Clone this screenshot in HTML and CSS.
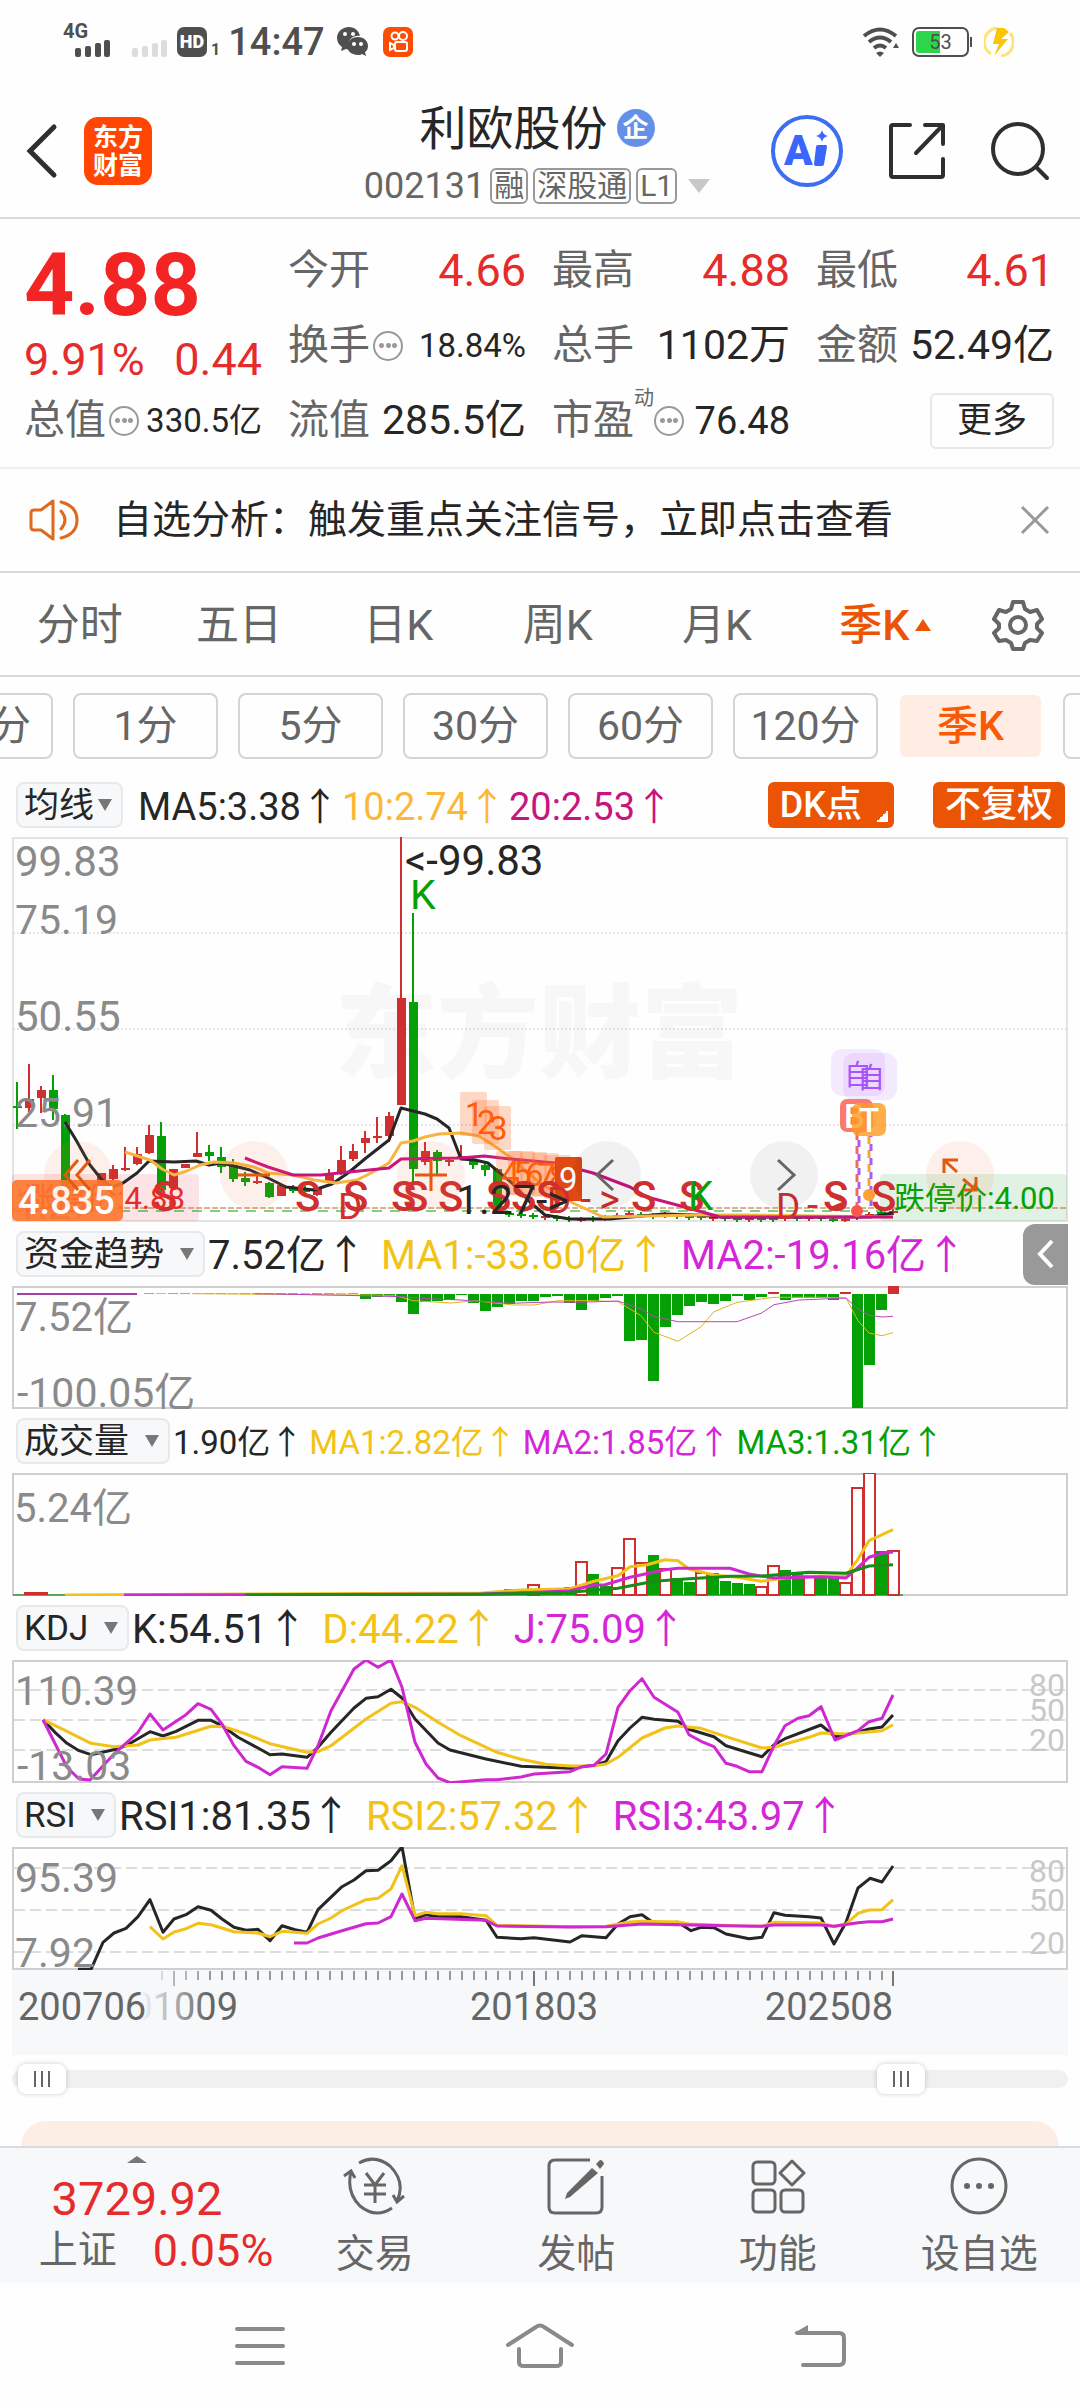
FILE: index.html
```
<!DOCTYPE html>
<html lang="zh-CN">
<head>
    <meta charset="UTF-8">
    <meta name="viewport" content="width=device-width, initial-scale=1.0">
    <title>利欧股份 002131</title>
    <link rel="stylesheet" href="styles.css">
</head>
<body>
    <div class="status">
        <svg class="signal" width="52" height="36" viewBox="-1 -2 52 36">
            <text x="0" y="15" class="net">4G</text>
            <g fill="#4f4f4f">
                <rect x="12" y="25" width="6" height="9" rx="2"/>
                <rect x="22" y="23" width="6" height="11" rx="2"/>
                <rect x="32" y="20" width="6" height="14" rx="2"/>
                <rect x="41" y="17" width="6" height="17" rx="2"/>
            </g>
        </svg>
        <svg class="signal-off" width="36" height="34" viewBox="0 0 36 34" fill="#dcdcdc">
            <rect x="0" y="25" width="6" height="9" rx="2"/>
            <rect x="10" y="23" width="6" height="11" rx="2"/>
            <rect x="20" y="20" width="6" height="14" rx="2"/>
            <rect x="29" y="17" width="6" height="17" rx="2"/>
        </svg>
        <span class="hd">HD</span>
        <span class="sim">1</span>
        <span class="clock">14:47</span>
        <svg class="wechat" width="32" height="30" viewBox="0 0 32 30" fill="#4f4f4f">
            <path d="M12 0C5 0 0 5 0 11c0 4 2 7 5 9l-1 4 5-2c1 0 2 .5 3 .4C9 13 16 8 23 9 22 4 18 0 12 0z"/>
            <path d="M21 10c-6 0-11 4-11 9s5 9 11 9c1 0 3 0 4-1l4 2-1-4c2-1 3-4 3-6 0-5-4-9-10-9z"/>
            <g fill="#fff"><circle cx="8" cy="7" r="2"/><circle cx="16" cy="7" r="2"/><circle cx="17" cy="17" r="2"/><circle cx="24" cy="17" r="2"/></g>
        </svg>
        <svg class="video" width="30" height="30" viewBox="0 0 30 30">
            <rect width="30" height="30" rx="7" fill="#fb4d04"/>
            <g fill="none" stroke="#fff" stroke-width="2">
                <circle cx="12" cy="9" r="3.5"/><circle cx="20" cy="9" r="4"/>
                <rect x="12" y="15" width="12" height="9" rx="2"/>
                <path d="M11 18l-4-2v7l4-2z"/>
            </g>
        </svg>
        <svg class="wifi" width="38" height="30" viewBox="0 0 38 30">
            <g fill="none" stroke="#4f4f4f" stroke-width="4">
                <path d="M2 9Q18-4 34 9"/><path d="M7 15Q18 6 29 15"/><path d="M12 21Q18 16 24 21"/>
            </g>
            <path d="M14 26q4-3 8 0l-4 4zM31 21l3-5 3 5z" fill="#4f4f4f"/>
        </svg>
        <span class="battery">53</span>
        <svg width="30" height="30" viewBox="0 0 30 30">
            <path d="M14 1A14 14 0 0 0 7 27" fill="none" stroke="#ffe27a" stroke-width="3"/>
            <path d="M17 29A14 14 0 0 0 26 6" fill="none" stroke="#ffe27a" stroke-width="3"/>
            <path d="M13 1L9 17h6L10 29 24 12h-7L25 5 20 1z" fill="#fdc500"/>
        </svg>
    </div>

    <header class="header">
        <div class="side">
            <a href="#" class="icon" aria-label="返回">
                <svg width="34" height="56" viewBox="0 0 34 56" fill="none" stroke="#2f2f2f" stroke-width="5" stroke-linecap="round"><path d="M30 4L6 28l24 24"/></svg>
            </a>
            <a href="#" class="logo"><span>东方</span><span>财富</span></a>
        </div>
        <div class="title">
            <h1>利欧股份<span class="corp">企</span></h1>
            <button class="code">002131<span>融</span><span>深股通</span><span>L1</span><i class="caret"></i></button>
        </div>
        <div class="side right">
            <button class="icon" aria-label="Ai">
                <svg width="74" height="74" viewBox="0 0 74 74">
                    <circle cx="37" cy="37" r="34" fill="none" stroke="#3d6df0" stroke-width="4"/>
                    <g fill="#3a66ff">
                        <text x="14" y="51" class="ai">A</text>
                        <path d="M48 31h8q1 0 1 2l-3 17q0 2-2 2h-6q-2 0-2-2l2-17q0-2 2-2zM52 16q1 5 6 6-5 1-6 6-1-5-6-6 5-1 6-6z"/>
                    </g>
                </svg>
            </button>
            <button class="icon" aria-label="分享">
                <svg width="58" height="58" viewBox="0 0 58 58" fill="none" stroke="#2f2f2f" stroke-width="4" stroke-linecap="round" stroke-linejoin="round">
                    <path d="M22 3H5q-2 0-2 2v48q0 2 2 2h48q2 0 2-2V37M37 3h18v19M55 3L28 31"/>
                </svg>
            </button>
            <button class="icon" aria-label="搜索">
                <svg width="60" height="60" viewBox="0 0 60 60" fill="none" stroke="#2f2f2f" stroke-width="4" stroke-linecap="round">
                    <circle cx="28" cy="28" r="25"/><path d="M47 47l10 10"/>
                </svg>
            </button>
        </div>
    </header>

    <section class="quote">
        <div class="price">
            <strong>4.88</strong>
            <p><span>9.91%</span><span>0.44</span></p>
        </div>
        <div class="stat"><span>今开</span><b class="up">4.66</b></div>
        <div class="stat"><span>最高</span><b class="up">4.88</b></div>
        <div class="stat"><span>最低</span><b class="up">4.61</b></div>
        <div class="stat"><span>换手<i class="info"></i></span><b class="small">18.84%</b></div>
        <div class="stat"><span>总手</span><b>1102万</b></div>
        <div class="stat"><span>金额</span><b>52.49亿</b></div>
        <div class="stat"><span>总值<i class="info"></i></span><b class="small">330.5亿</b></div>
        <div class="stat"><span>流值</span><b>285.5亿</b></div>
        <div class="stat"><span>市盈<sup>动</sup><i class="info"></i></span><b class="mid">76.48</b></div>
        <button class="more">更多</button>
    </section>

    <section class="notice">
        <svg width="52" height="44" viewBox="0 0 52 44" fill="none" stroke="#e06a1c" stroke-width="3" stroke-linejoin="round" stroke-linecap="round">
            <path d="M24 3v38L12 32H5q-3 0-3-3V15q0-3 3-3h7z"/><path d="M32 13q8 9 0 18M32 4q16 4 16 18T32 40"/>
        </svg>
        <a href="#">自选分析：触发重点关注信号，立即点击查看</a>
        <button class="icon" aria-label="关闭">
            <svg width="30" height="30" viewBox="0 0 30 30" stroke="#999" stroke-width="3"><path d="M2 2l26 26M28 2L2 28"/></svg>
        </button>
    </section>

    <nav class="tabs">
        <a href="#">分时</a>
        <a href="#">五日</a>
        <a href="#">日K</a>
        <a href="#">周K</a>
        <a href="#">月K</a>
        <a href="#" class="active">季K<i class="caret-up"></i></a>
        <button class="icon" aria-label="设置">
            <svg width="52" height="52" viewBox="0 0 52 52" fill="none" stroke="#666" stroke-width="4" stroke-linejoin="round">
                <path d="M21 3h10l2 7 5 3 7-2 5 9-5 5v4l5 5-5 8-7-1-5 3-2 6H21l-2-6-5-3-7 1-5-8 5-5v-4l-5-5 5-9 7 2 5-3z"/>
                <circle cx="26" cy="26" r="8"/>
            </svg>
        </button>
    </nav>

    <div class="periods">
        <button>分</button>
        <button>1分</button>
        <button>5分</button>
        <button>30分</button>
        <button>60分</button>
        <button>120分</button>
        <button class="active">季K</button>
        <button aria-label="更多周期"></button>
    </div>

    <main>
        <div class="legend legend-ma">
            <span class="pick tight"><select aria-label="主图指标"><option>均线</option></select></span>
            <span>MA5:3.38<i>↑</i></span>
            <span class="amber">10:2.74<i>↑</i></span>
            <span class="rose">20:2.53<i>↑</i></span>
            <button class="tag corner">DK点</button>
            <button class="tag">不复权</button>
        </div>
        <div class="chart">
            <svg id="price" viewBox="12 837 1056 385"></svg>
            <div class="tools">
                <button aria-label="最早"><svg viewBox="0 0 68 68"><path d="M34 19L21 34l13 15M46 19L33 34l13 15"/></svg></button>
                <button aria-label="缩小"><svg viewBox="0 0 68 68"><path d="M18 34h32"/></svg></button>
                <button aria-label="放大"><svg viewBox="0 0 68 68"><path d="M18 34h32M34 18v32"/></svg></button>
                <button class="gray" aria-label="左移"><svg viewBox="0 0 68 68"><path d="M40 19L24 34l16 15"/></svg></button>
                <button class="gray" aria-label="右移"><svg viewBox="0 0 68 68"><path d="M28 19l16 15-16 15"/></svg></button>
                <button aria-label="全屏"><svg viewBox="0 0 68 68"><path d="M18 32V19h14M18 19l13 12M50 36v13H37M50 49L37 38"/></svg></button>
            </div>
        </div>

        <div class="legend">
            <span class="pick"><select aria-label="指标一"><option>资金趋势</option></select></span>
            <span>7.52亿<i>↑</i></span>
            <span class="yellow">MA1:-33.60亿<i>↑</i></span>
            <span class="purple">MA2:-19.16亿<i>↑</i></span>
            <button class="fold" aria-label="收起">
                <svg width="20" height="32" viewBox="0 0 20 32" fill="none" stroke="#fff" stroke-width="4"><path d="M16 3L4 16l12 13"/></svg>
            </button>
        </div>
        <svg class="panel" id="fund" viewBox="0 0 1056 123"></svg>

        <div class="legend dense">
            <span class="pick"><select aria-label="指标二"><option>成交量</option></select></span>
            <span>1.90亿<i>↑</i></span>
            <span class="yellow">MA1:2.82亿<i>↑</i></span>
            <span class="purple">MA2:1.85亿<i>↑</i></span>
            <span class="green">MA3:1.31亿<i>↑</i></span>
        </div>
        <svg class="panel" id="volume" viewBox="0 0 1056 123"></svg>

        <div class="legend">
            <span class="pick"><select aria-label="指标三"><option>KDJ</option></select></span>
            <span>K:54.51<i>↑</i></span>
            <span class="yellow">D:44.22<i>↑</i></span>
            <span class="purple">J:75.09<i>↑</i></span>
        </div>
        <svg class="panel" id="kdj" viewBox="0 0 1056 123"></svg>

        <div class="legend">
            <span class="pick"><select aria-label="指标四"><option>RSI</option></select></span>
            <span>RSI1:81.35<i>↑</i></span>
            <span class="yellow">RSI2:57.32<i>↑</i></span>
            <span class="purple">RSI3:43.97<i>↑</i></span>
        </div>
        <svg class="panel" id="rsi" viewBox="0 0 1056 123"></svg>
        <svg class="axis" id="axis" viewBox="0 0 1056 85"></svg>

        <div class="range">
            <input type="range" min="0" max="1000" value="6" aria-label="开始">
            <input type="range" min="0" max="1000" value="858" aria-label="结束">
        </div>
        <div class="card"></div>
    </main>

    <footer class="bar">
        <a href="#" class="index">
            <i class="caret-up"></i>
            <strong>3729.92</strong>
            <span><em>上证</em>0.05%</span>
        </a>
        <a href="#">
            <svg width="66" height="60" viewBox="0 0 66 60" fill="none" stroke="#666" stroke-width="3">
                <path d="M17 7Q33-2 48 10 64 26 55 45M50 52Q34 63 18 50 4 36 9 16M2 20l7-5 4 7M62 40l-7 6-4-7"/>
                <path d="M24 17l9 12 9-12M22 29h22M22 38h22M33 29v18"/>
            </svg>
            交易
        </a>
        <a href="#">
            <svg width="60" height="60" viewBox="0 0 60 60" fill="none" stroke="#666" stroke-width="3">
                <path d="M44 4H9q-6 0-6 6v41q0 6 6 6h41q6 0 6-6V20"/>
                <path d="M46 12l6 5-28 24-5 2 2-6zM50 8l4-4q3 0 4 4l-4 5z" fill="#666" stroke="none"/>
            </svg>
            发帖
        </a>
        <a href="#">
            <svg width="60" height="60" viewBox="0 0 60 60" fill="none" stroke="#666" stroke-width="3">
                <rect x="5" y="6" width="22" height="22" rx="4"/>
                <rect x="5" y="34" width="22" height="22" rx="4"/>
                <rect x="33" y="34" width="22" height="22" rx="4"/>
                <path d="M44 5l12 12-12 12-12-12z" stroke-linejoin="round"/>
            </svg>
            功能
        </a>
        <a href="#">
            <svg width="60" height="60" viewBox="0 0 60 60">
                <circle cx="30" cy="30" r="27" fill="none" stroke="#666" stroke-width="3"/>
                <g fill="#666"><circle cx="18" cy="30" r="3"/><circle cx="30" cy="30" r="3"/><circle cx="42" cy="30" r="3"/></g>
            </svg>
            设自选
        </a>
    </footer>

    <nav class="system">
        <button class="icon" aria-label="菜单">
            <svg width="52" height="44" viewBox="0 0 52 44" stroke="#8a8a8a" stroke-width="4" stroke-linecap="round"><path d="M3 5h46M3 22h46M3 39h46"/></svg>
        </button>
        <button class="icon" aria-label="主页">
            <svg width="70" height="46" viewBox="0 0 70 46" fill="none" stroke="#8a8a8a" stroke-width="4" stroke-linecap="round" stroke-linejoin="round"><path d="M3 22L31 4q4-3 8 0l28 18M14 26v13q0 4 5 4h32q5 0 5-4V26"/></svg>
        </button>
        <button class="icon" aria-label="后退">
            <svg width="54" height="46" viewBox="0 0 54 46" fill="none" stroke="#8a8a8a" stroke-width="4" stroke-linecap="round"><path d="M4 10h42q5 0 5 5v22q0 5-5 5H10"/><path d="M1 10L15 2v9z" fill="#8a8a8a" stroke="none"/></svg>
        </button>
    </nav>
    <script src="script.js"></script>
</body>
</html>
```
FILE: styles.css
```
* {
    box-sizing: border-box;
}

:root {
    --text: #262626;
    --gray: #666;
    --line: #d9d9d9;
    --red: #e52b2b;
    --orange: #ea5404;
    --yellow: #f2c218;
    --purple: #d426d8;
    --green: #05a005;
}

body {
    margin: 0;
    background: #fefefe;
    color: var(--text);
    font-family: Roboto, "Noto Sans CJK SC", sans-serif;
    font-size: 40px;
    line-height: 1;
}

a {
    color: inherit;
    text-decoration: none;
}

button,
select {
    font: inherit;
    color: inherit;
    background: none;
    border: 0;
    padding: 0;
    margin: 0;
}

i,
em {
    font-style: normal;
}

svg {
    display: block;
}

.icon {
    display: grid;
    place-items: center;
}

/* status bar */
.status {
    display: flex;
    align-items: center;
    height: 80px;
    padding: 4px 66px 0 62px;
    color: #4f4f4f;
}

.signal {
    margin-top: -6px;
}

.net {
    font-size: 20px;
    font-weight: 700;
    fill: #4f4f4f;
}

.signal-off {
    margin: -4px 9px 0 18px;
}

.hd {
    display: grid;
    place-items: center;
    width: 30px;
    height: 30px;
    border-radius: 7px;
    background: #4f4f4f;
    color: #fff;
    font-size: 18px;
    font-weight: 900;
}

.sim {
    margin: 16px 8px 0 4px;
    font-size: 16px;
    font-weight: 700;
}

.clock {
    font-size: 38px;
    font-weight: 500;
}

.wechat {
    margin-left: 12px;
}

.video {
    margin-left: 14px;
}

.wifi {
    margin-left: auto;
}

.battery {
    position: relative;
    display: grid;
    place-items: center;
    width: 57px;
    height: 30px;
    margin: 0 15px 0 12px;
    border: 2px solid #4f4f4f;
    border-radius: 7px;
    background: linear-gradient(90deg, #2cd549 50%, transparent 50%) content-box;
    padding: 2px;
    font-size: 20px;
}

.battery::after {
    content: "";
    position: absolute;
    right: -5px;
    width: 2px;
    height: 10px;
    background: #4f4f4f;
}

/* header */
.header {
    display: grid;
    grid-template-columns: 1fr auto 1fr;
    align-items: center;
    height: 139px;
    padding: 5px 30px 0 24px;
    border-bottom: 2px solid var(--line);
}

.side {
    display: flex;
    align-items: center;
    gap: 26px;
}

.right {
    justify-content: flex-end;
    gap: 44px;
}

.logo {
    display: grid;
    place-content: center;
    gap: 3px;
    width: 68px;
    height: 68px;
    border-radius: 14px;
    background: #ff4602;
    color: #fff;
    font-size: 25px;
    font-weight: 700;
}

.title {
    display: grid;
    justify-items: center;
    gap: 16px;
    padding-top: 6px;
}

h1 {
    display: flex;
    align-items: center;
    gap: 9px;
    margin: 0;
    font-size: 47px;
    font-weight: 400;
}

.corp {
    display: grid;
    place-items: center;
    width: 38px;
    height: 38px;
    border-radius: 50%;
    background: #6590e8;
    color: #fff;
    font-size: 26px;
    font-weight: 700;
}

.code {
    display: flex;
    align-items: center;
    gap: 5px;
    color: var(--gray);
    font-size: 36px;
}

.code span {
    height: 36px;
    padding: 0 2px;
    border: 2px solid #999;
    border-radius: 6px;
    font-size: 30px;
    line-height: 32px;
}

.caret {
    margin-left: 6px;
    border: 11px solid transparent;
    border-top: 14px solid #c8c8c8;
    border-bottom: 0;
}

.ai {
    font-size: 42px;
    font-weight: 900;
}

/* quote */
.quote {
    display: grid;
    grid-template-columns: repeat(4, 1fr);
    grid-auto-rows: 75px;
    column-gap: 26px;
    padding: 14px 26px 9px 24px;
    border-bottom: 2px solid #eee;
}

.price {
    grid-row: span 2;
    color: var(--red);
}

.price strong {
    display: block;
    color: #f32424;
    font-size: 88px;
    font-weight: 700;
    line-height: 104px;
}

.price p {
    display: flex;
    justify-content: space-between;
    margin: 0;
    font-size: 45px;
}

.stat {
    display: flex;
    align-items: center;
    justify-content: space-between;
    white-space: nowrap;
}

.stat span {
    display: flex;
    align-items: center;
    gap: 3px;
    color: var(--gray);
    font-size: 41px;
}

.stat sup {
    align-self: flex-start;
    margin: -12px -3px 0;
    font-size: 20px;
}

.stat b {
    font-size: 41px;
    font-weight: 400;
}

.stat .up {
    color: var(--red);
    font-size: 45px;
}

.stat .small {
    font-size: 33px;
}

.stat .mid {
    font-size: 38px;
}

.info {
    width: 30px;
    height: 30px;
    border: 2px solid #999;
    border-radius: 50%;
    background: radial-gradient(circle, #999 2px, transparent 3px) center / 7px 7px no-repeat,
        radial-gradient(circle, #999 2px, transparent 3px) 3px center / 7px 7px no-repeat,
        radial-gradient(circle, #999 2px, transparent 3px) 16px center / 7px 7px no-repeat;
}

.more {
    place-self: center end;
    width: 124px;
    height: 56px;
    border: 2px solid #e8e8e8;
    border-radius: 6px;
    font-size: 35px;
}

/* notice */
.notice {
    display: flex;
    align-items: center;
    gap: 32px;
    height: 104px;
    padding: 0 30px 0 29px;
    border-bottom: 2px solid var(--line);
    font-size: 39px;
}

.notice .icon {
    margin-left: auto;
}

/* tabs */
.tabs {
    display: grid;
    grid-template-columns: repeat(6, 1fr) 124px;
    align-items: center;
    height: 104px;
    padding-top: 2px;
    border-bottom: 2px solid var(--line);
    color: var(--gray);
    font-size: 43px;
    text-align: center;
}

.tabs .active {
    display: flex;
    align-items: center;
    justify-content: center;
    gap: 6px;
    padding-left: 18px;
    color: var(--orange);
    font-weight: 500;
}

.caret-up {
    border: 8px solid transparent;
    border-bottom: 12px solid currentColor;
    border-top: 0;
}

.periods {
    display: flex;
    gap: 20px;
    margin: 16px 0 0 -92px;
    overflow: hidden;
}

.periods button {
    flex: 0 0 145px;
    height: 66px;
    border: 2px solid #d4d4d4;
    border-radius: 8px;
    color: var(--gray);
    font-size: 41px;
}

.periods button:first-child {
    padding-left: 60px;
}

.periods .active {
    border-color: #fefefe;
    background: #ffede4;
    color: #fa5a05;
    font-weight: 500;
}

/* charts */
main {
    padding: 0 12px;
}

.legend {
    display: flex;
    align-items: center;
    gap: 15px;
    height: 64px;
    padding-left: 4px;
    font-size: 40px;
    white-space: nowrap;
}

.legend i {
    font-family: "Noto Sans CJK SC", sans-serif;
}

.legend-ma {
    gap: 3px;
    height: 78px;
    padding: 14px 3px 0 4px;
    font-size: 38px;
}

.dense {
    gap: 6px;
    font-size: 33px;
}

.pick {
    position: relative;
    margin-right: -12px;
}

.dense .pick {
    margin-right: -3px;
}

.tight {
    margin-right: 12px;
}

.pick::after {
    content: "";
    position: absolute;
    right: 11px;
    top: 17px;
    border: 7px solid transparent;
    border-top: 12px solid #777;
    border-bottom: 0;
    pointer-events: none;
}

.pick select {
    appearance: none;
    height: 46px;
    padding: 0 38px 0 6px;
    border: 2px solid #e8e9eb;
    border-radius: 8px;
    background: #f7f8fa;
    font-size: 35px;
}

.tight select {
    padding-right: 26px;
}

.amber {
    color: #fbb836;
}

.rose {
    color: #c8147e;
}

.yellow {
    color: var(--yellow);
}

.purple {
    color: var(--purple);
}

.green {
    color: var(--green);
}

.tag {
    height: 46px;
    margin-left: 36px;
    padding: 0 12px;
    border-radius: 6px;
    background: var(--orange);
    color: #fff;
    font-size: 36px;
    font-weight: 500;
}

.corner {
    margin-left: auto;
    padding-right: 32px;
    background: linear-gradient(135deg, transparent 50%, #fff 50%) right 6px bottom 6px / 12px 12px no-repeat, var(--orange);
}

.fold {
    display: grid;
    place-items: center;
    width: 45px;
    height: 61px;
    margin-left: auto;
    border-radius: 12px 0 0 12px;
    background: #999;
}

.chart {
    position: relative;
}

.chart svg,
.panel,
.axis {
    width: 100%;
}

.tools {
    position: absolute;
    left: 3%;
    right: 7%;
    bottom: 13px;
    display: flex;
    justify-content: space-between;
}

.tools button {
    width: 68px;
    height: 68px;
    border-radius: 50%;
    background: rgba(250, 110, 50, .1);
}

.tools path {
    fill: none;
    stroke: #e05a10;
    stroke-width: 3;
}

.tools .gray {
    background: rgba(0, 0, 0, .05);
}

.tools .gray path {
    stroke: var(--gray);
}

.range {
    position: relative;
    height: 18px;
    margin-top: 15px;
    border-radius: 9px;
    background: #f0f0f2;
}

.range input {
    position: absolute;
    inset: -6px 0;
    width: 100%;
    height: 30px;
    margin: 0;
    appearance: none;
    background: none;
    pointer-events: none;
}

.range input::-webkit-slider-thumb {
    appearance: none;
    width: 48px;
    height: 30px;
    border-radius: 8px;
    box-shadow: 0 0 5px rgba(0, 0, 0, .2);
    background: repeating-linear-gradient(90deg, #666 0 2px, transparent 2px 7px) center / 16px 16px no-repeat, #fff;
    pointer-events: auto;
}

.card {
    height: 25px;
    margin: 33px 9px 0;
    border-radius: 40px 40px 0 0;
    background: #fdeee5;
}

/* bottom bar */
.bar {
    display: grid;
    grid-template-columns: 274px repeat(4, 1fr);
    height: 137px;
    border-top: 2px solid #d8dbe0;
    background: #f7f8fa;
    color: var(--gray);
    font-size: 39px;
}

.bar a {
    display: grid;
    justify-items: center;
    align-content: start;
    gap: 19px;
    padding-top: 8px;
}

.bar .index {
    gap: 6px;
    color: var(--red);
    font-size: 45px;
}

.index .caret-up {
    border-width: 0 10px 7px;
    border-bottom-color: #777;
}

.index strong {
    margin-top: 6px;
    font-weight: 400;
    font-size: 47px;
}

.index span {
    display: flex;
    align-items: center;
    gap: 36px;
    padding-left: 38px;
}

.index em {
    color: var(--gray);
    font-size: 39px;
}

.system {
    display: grid;
    grid-template-columns: repeat(3, 1fr);
    align-items: center;
    height: 125px;
    padding: 0 120px;
}
```
FILE: script.js
```
const RED = "#cf2f2f";
const GREEN = "#05a005";
const BLACK = "#262626";
const YELLOW = "#f2c218";
const PURPLE = "#cf28d0";
const STEP = 12;

// centre of the n-th candle, counted from the page's left edge
const barX = (i) => 17 + STEP * i;

const add = (id, html) => document.getElementById(id).insertAdjacentHTML("beforeend", html);

const rect = (x, y, w, h, fill, extra = "") =>
  `<rect x="${x}" y="${y}" width="${w}" height="${h}" fill="${fill}" ${extra}/>`;

const label = (x, y, text, fill, size = 40, extra = "") =>
  `<text x="${x}" y="${y}" fill="${fill}" font-size="${size}" ${extra}>${text}</text>`;

const dash = (x1, x2, y, color, pattern, width = 1) =>
  `<path d="M${x1} ${y}H${x2}" stroke="${color}" stroke-width="${width}" stroke-dasharray="${pattern}"/>`;

const line = (points, color, width = 3) =>
  `<polyline points="${points}" fill="none" stroke="${color}" stroke-width="${width}" stroke-linejoin="round"/>`;

/* ---------- price ---------- */
// index, up, high, low, body top, body bottom
const candles = [
  [0, 0, 1082, 1129, 1106, 1108], [1, 1, 1064, 1113, 1099, 1108], [2, 1, 1086, 1113, 1090, 1098],
  [3, 0, 1075, 1120, 1090, 1109], [4, 0, 1114, 1200, 1115, 1200], [7, 1, 1173, 1190, 1173, 1190],
  [8, 1, 1165, 1180, 1169, 1179], [9, 1, 1147, 1171, 1168, 1170], [10, 1, 1147, 1165, 1154, 1164],
  [11, 1, 1125, 1154, 1135, 1153], [12, 0, 1122, 1195, 1136, 1190], [13, 1, 1169, 1188, 1169, 1188],
  [14, 1, 1164, 1168, 1164, 1168], [15, 1, 1132, 1157, 1153, 1157], [16, 0, 1145, 1161, 1152, 1156],
  [17, 0, 1147, 1173, 1157, 1167], [18, 0, 1159, 1182, 1165, 1179], [19, 0, 1172, 1186, 1178, 1182],
  [20, 1, 1176, 1184, 1181, 1183], [21, 0, 1182, 1198, 1183, 1197], [22, 1, 1185, 1196, 1185, 1196],
  [23, 0, 1185, 1193, 1188, 1191], [24, 0, 1186, 1193, 1189, 1192], [25, 1, 1187, 1196, 1188, 1195],
  [26, 1, 1169, 1182, 1175, 1181], [27, 1, 1146, 1175, 1160, 1172], [28, 1, 1144, 1161, 1151, 1159],
  [29, 1, 1131, 1153, 1138, 1143], [30, 1, 1117, 1143, 1136, 1138], [31, 1, 1112, 1142, 1116, 1136],
  [32, 1, 837, 1105, 998, 1105], [33, 0, 913, 1185, 1002, 1169], [34, 1, 1142, 1165, 1151, 1162],
  [35, 0, 1150, 1176, 1152, 1161], [36, 1, 1157, 1166, 1160, 1162], [37, 1, 1145, 1158, 1156, 1158],
  [38, 0, 1156, 1169, 1161, 1165], [39, 0, 1162, 1176, 1165, 1170], [40, 0, 1168, 1212, 1169, 1212],
];
// the flat tail: body tops only, negative = down
const tail = [-1213, -1214, -1215, 1216, -1217, -1218, 1219, -1218, 1217, 1215, 1213, -1214, -1215, 1214,
  -1215, -1216, -1216, 1217, -1217, -1218, 1218, -1218, -1218, 1217, -1217, 1217, -1217, -1219, 1219, 1216, 1214, -1212, 1211];
tail.forEach((v, n) => {
  const y = Math.abs(v);
  candles.push([41 + n, v > 0 ? 1 : 0, y - 2, y + 4, y, y + 2]);
});

let price = rect(13, 838, 1054, 383, "none", 'stroke="#e3e3e3" stroke-width="2"');
price += label(335, 1070, "东方财富", "#f7f7f7", 102, 'font-weight="900"');
[933, 1029, 1125].forEach((y) => (price += dash(13, 1067, y, "#ccc", "2 2")));
price += rect(12, 1174, 187, 47, "rgba(240,50,70,.13)", 'rx="4"');
price += rect(880, 1174, 187, 47, "rgba(20,160,40,.12)", 'rx="4"');

candles.forEach(([i, up, high, low, top, bottom]) => {
  const c = up ? RED : GREEN;
  price += rect(barX(i) - 1, high, 2, low - high, c) + rect(barX(i) - 4, top, 9, bottom - top, c);
});

price += label(15, 876, "99.83", "#8a8a8a", 42);
price += label(15, 934, "75.19", "#8a8a8a", 41);
price += label(15, 1031, "50.55", "#8a8a8a", 42);
price += label(15, 1127, "25.91", "#8a8a8a", 41);
price += label(15, 1219, "1.27", "#8a8a8a");
price += dash(12, 1067, 1208, "#b9602f", "6 2", 1);
price += dash(12, 893, 1211, GREEN, "10 8", 1);

price += line("65,1122 76,1140 90,1165 102,1180 112,1187 123,1183 137,1173 149,1161 174,1162 196,1161 209,1165 221,1163 234,1166 250,1170 268,1178 286,1187 314,1190 332,1184 348,1173 366,1158 389,1140 401,1108 425,1114 437,1119 449,1128 461,1159 475,1160 488,1163 512,1183 530,1202 545,1215 570,1219 610,1219 663,1214 697,1215 723,1217 870,1217 893,1213", BLACK);
price += line("125,1152 150,1160 162,1169 174,1175 187,1171 200,1165 214,1162 234,1163 254,1167 268,1173 293,1175 314,1180 336,1183 357,1180 371,1173 389,1163 401,1143 413,1141 425,1137 439,1134 461,1133 479,1136 496,1147 510,1157 540,1183 573,1203 603,1217 697,1215 740,1215 893,1217", "#f6b440");
price += line("245,1158 268,1167 293,1175 321,1175 339,1173 389,1168 401,1159 461,1158 484,1156 511,1159 555,1163 593,1173 630,1187 647,1197 677,1205 720,1217 893,1217", "#c8147e");

// nine-turn counters
[[460, 1092], [472, 1100], [484, 1106], [496, 1151], [508, 1151], [520, 1152], [532, 1153], [544, 1155]].forEach(([x, y], n) => {
  price += rect(x, y, 27, 44, "rgba(255,110,40,.26)", 'rx="2"') + label(x + 5, y + 34, n + 1, "#ff5a05", 33);
});
price += rect(555, 1157, 27, 44, "#e04814", 'rx="2"') + label(559, 1191, 9, "#fff", 33);

[152, 295, 343, 391, 403, 438, 486, 511, 536, 631, 679, 823, 871].forEach((x) => {
  price += label(x, 1211, "S", RED, 42, 'font-weight="500"');
});
price += label(338, 1219, "D", RED, 37);
price += label(547, 1213, "D", RED, 37) + label(580, 1213, "-", RED) + label(599, 1213, "&gt;", RED);
price += label(776, 1219, "D", RED, 37) + label(807, 1219, "-", RED) + label(827, 1215, "&gt;", RED);
price += label(410, 909, "K", GREEN, 41) + label(688, 1210, "K", GREEN);
price += label(405, 875, "&lt;-99.83", BLACK, 42) + label(456, 1214, "1.27-&gt;", BLACK, 41);

price += `<g fill="none" stroke-width="3">
  <path d="M857 1132V1210" stroke="#ef6a62" stroke-dasharray="8 6"/>
  <path d="M859 1132V1210" stroke="#a95cf0" stroke-dasharray="7 7" stroke-dashoffset="6"/>
  <path d="M869 1136V1194" stroke="#f5a53c" stroke-dasharray="8 6"/>
  <path d="M871 1136V1206" stroke="#a95cf0" stroke-dasharray="7 7" stroke-dashoffset="6"/>
</g>
<circle cx="857" cy="1211" r="6" fill="#f8574a"/><circle cx="869" cy="1195" r="6" fill="#fda035"/>`;
price += rect(831, 1049, 54, 47, "rgba(170,90,245,.12)", 'rx="11"') + rect(843, 1053, 54, 47, "rgba(170,90,245,.12)", 'rx="11"');
price += label(844, 1085, "自", "#a855f7", 28) + label(857, 1088, "自", "#a855f7", 28);
price += rect(840, 1099, 33, 33, "#fa7a6c", 'rx="7"') + label(844, 1128, "B", "#fff", 33, 'font-weight="500"');
price += rect(852, 1103, 34, 33, "rgba(255,155,35,.82)", 'rx="7"') + label(859, 1132, "T", "#fff", 33, 'font-weight="500"');

price += label(24, 1209, "涨停价:4.88", "#e52b2b", 31) + label(894, 1209, "跌停价:4.00", GREEN, 31);
price += rect(12, 1180, 111, 41, "rgba(255,118,44,.9)", 'rx="5"') + label(18, 1214, "4.835", "#fff", 38, 'font-weight="500"');
add("price", price);

/* ---------- sub charts ---------- */
// plot units run 1568 wide and three to a pixel down from the panel's top
const sx = (x) => Math.round(x * 0.6888 - 12);
const plot = (data, top, color, width) =>
  line(data.split(" ").map((p) => {
    const [x, y] = p.split(",");
    return `${sx(x)},${((y - top) / 3).toFixed(1)}`;
  }).join(" "), color, width);
const frame = rect(1, 1, 1054, 121, "none", 'stroke="#cfcfcf" stroke-width="2"');

// fund flow, first bar is 29
const flow = [5, 3, 2, 8, 20, 8, 7, 6, 1, 9, 17, 13, 10, 7, 7, 3, 2, 9, 16, 7, 4, 2, 47, 46, 87, 33, 21, 12, 8, 10, 7, 2, 6, 3, -2, 6, 4, 4, 4, 6, -2, 114, 71, 16, -8];
let fund = frame + rect(5, 7, 120, 2, "#a63fa8");
for (let i = 11; i < 29; i++) {
  fund += rect(barX(i) - 17, 7, 10, 1, i % 3 ? "#e88" : "#f2c218");
}
flow.forEach((v, n) => {
  const x = barX(29 + n) - 17;
  fund += v > 0 ? rect(x, 8, 11, v, GREEN) : rect(x, 8 + v, 11, -v, RED);
});
fund += plot("280,219 570,224 583,230 600,240 655,247 690,240 745,253 775,253 810,240 860,240 897,243 931,285 949,335 984,362 1018,318 1036,273 1070,245 1123,230 1192,230 1228,232 1245,300 1262,337 1280,345 1297,336", 196, "#dfb51e", 1);
fund += plot("370,219 500,224 583,228 620,234 670,238 740,248 800,244 840,245 897,241 931,265 949,288 984,303 1070,303 1105,278 1123,252 1160,238 1228,232 1245,265 1262,284 1280,289 1297,287", 196, "#b946bb", 1);
fund += label(3, 45, "7.52亿", "#8a8a8a") + label(5, 121, "-100.05亿", "#8a8a8a", 41);
add("fund", fund);

// volume, first bar is 41; negative = down quarter
const vols = [-6, -6, 10, -6, -6, -8, 33, -21, -9, 27, 56, 32, -40, 26, -17, -13, 22, -22, -14, -12, -11, 8, 29, -25, -21, 19, -18, -17, 12, 107, 122, -44, 44];
let volume = frame + rect(1, 121, 890, 2, "#5aa85a") + rect(12, 119, 24, 3, RED);
vols.forEach((v, n) => {
  const x = barX(41 + n) - 17;
  const h = Math.abs(v);
  volume += v < 0
    ? rect(x, 122 - h, 11, h, GREEN)
    : rect(x, 122 - h, 11, h, "#fff", `stroke="${RED}" stroke-width="2"`);
});
volume += plot("95,403 700,397 757,388 827,384 862,362 897,345 914,318 940,312 966,297 984,300 1001,325 1036,343 1070,350 1105,362 1140,352 1192,346 1228,346 1245,295 1262,240 1297,207", 37, YELLOW);
volume += plot("180,403 700,400 790,394 827,390 862,373 879,372 914,350 966,327 984,323 1060,323 1088,340 1123,352 1192,348 1228,352 1245,320 1262,290 1280,278 1297,274", 37, PURPLE);
volume += plot("355,403 690,401 790,398 827,395 897,383 949,362 1000,354 1060,347 1105,346 1175,335 1228,338 1262,316 1297,312", 37, "#178c17");
volume += label(2, 49, "5.24亿", "#8a8a8a");
add("volume", volume);

let kdj = frame + dash(2, 1054, 30, "#ddd", "11 5", 2) + dash(2, 1054, 60, "#ddd", "11 5", 2) + dash(2, 1054, 90, "#ddd", "11 5", 2);
kdj += plot("62,777 80,815 97,848 115,870 132,882 170,865 183,855 218,813 236,826 255,812 288,779 306,779 322,795 345,830 375,862 392,882 410,880 445,890 462,860 480,815 514,742 532,713 549,708 567,686 584,712 602,775 636,847 654,868 705,895 757,917 792,920 827,923 862,914 880,903 897,840 914,802 932,770 950,776 984,782 1001,806 1036,828 1054,855 1106,888 1123,852 1140,834 1192,793 1212,828 1245,815 1262,805 1280,799 1297,763", 598, BLACK);
kdj += plot("62,777 97,812 132,848 165,858 200,853 218,838 255,830 306,797 325,798 357,820 392,849 445,875 462,873 480,855 532,775 567,728 584,723 602,740 636,785 670,825 722,875 757,896 792,911 827,916 862,916 880,910 897,890 932,832 966,802 984,796 1018,803 1054,828 1106,862 1123,860 1175,830 1192,817 1230,820 1280,810 1297,792", 598, YELLOW);
kdj += plot("62,777 97,920 115,955 130,958 165,880 200,815 218,760 236,808 270,762 288,729 306,746 322,790 340,855 357,902 375,920 392,942 410,918 445,923 462,855 480,750 514,625 532,598 549,620 567,598 584,680 602,845 619,910 636,952 654,966 705,957 722,957 757,949 775,940 827,933 845,918 862,914 880,880 897,740 914,690 932,654 950,710 984,755 1001,822 1018,842 1036,858 1054,908 1070,917 1088,933 1106,933 1123,855 1140,795 1158,773 1175,765 1192,738 1212,838 1245,810 1262,783 1280,773 1297,703", 598, PURPLE);
kdj += label(3, 45, "110.39", "#8a8a8a") + label(5, 120, "-13.03", "#8a8a8a", 41);
[[80, 36], [50, 61], [20, 91]].forEach(([t, y]) => (kdj += label(1053, y, t, "#c8c8c8", 32, 'text-anchor="end"')));
add("kdj", kdj);

let rsi = frame + dash(2, 1054, 21, "#ddd", "11 5", 2) + dash(2, 1054, 63, "#ddd", "11 5", 2) + dash(2, 1054, 105, "#ddd", "11 5", 2);
rsi += plot("113,566 132,566 150,485 166,457 183,443 200,408 218,357 236,455 253,415 270,402 288,378 306,389 322,415 340,440 357,449 375,446 392,480 410,435 428,447 445,455 462,387 497,318 514,298 532,270 549,269 567,240 584,198 602,415 619,402 636,408 670,408 705,419 722,470 757,474 775,471 827,484 845,465 880,471 897,430 914,408 932,402 950,428 984,425 1003,450 1018,440 1036,441 1054,460 1088,474 1106,470 1124,396 1140,404 1175,408 1192,412 1211,490 1228,425 1245,322 1263,293 1280,304 1297,256", 199, BLACK);
rsi += plot("218,438 236,475 253,454 270,444 288,428 306,432 340,453 375,457 392,468 410,452 445,458 462,430 480,412 497,390 532,357 549,353 567,325 584,255 602,405 619,395 636,399 670,399 705,405 722,434 775,436 827,438 880,437 914,424 932,422 984,424 1001,430 1088,437 1106,437 1123,425 1192,427 1211,438 1228,430 1245,398 1262,388 1280,387 1297,357", 199, YELLOW);
rsi += plot("427,487 445,487 462,472 497,450 532,429 549,427 567,408 584,340 602,420 619,413 705,419 722,436 827,439 880,438 932,430 1054,435 1106,437 1123,433 1192,433 1211,437 1245,426 1262,423 1280,423 1297,415", 199, PURPLE);
rsi += label(3, 45, "95.39", "#8a8a8a", 41) + label(3, 120, "7.92", "#8a8a8a", 41);
[[80, 35], [50, 64], [20, 107]].forEach(([t, y]) => (rsi += label(1053, y, t, "#c8c8c8", 32, 'text-anchor="end"')));
add("rsi", rsi);

/* ---------- time axis ---------- */
let axis = `<defs><linearGradient id="fade"><stop offset="0.65" stop-color="#f7f8fa"/><stop offset="1" stop-color="#f7f8fa" stop-opacity="0"/></linearGradient></defs>`;
axis += rect(0, 0, 1056, 85, "#f7f8fa");
for (let x = 150; x < 880; x += STEP) {
  const major = x === 162 || x === 522;
  axis += rect(x - 1, 1, 2, major ? 15 : 9, major ? "#777" : "#999");
}
axis += label(162, 50, "201009", "#666", 38, 'text-anchor="middle"');
axis += rect(0, 0, 196, 85, "url(#fade)");
axis += label(6, 50, "200706", "#666", 38);
axis += label(522, 50, "201803", "#666", 38, 'text-anchor="middle"');
axis += rect(880, 1, 2, 15, "#777") + label(881, 50, "202508", "#666", 38, 'text-anchor="end"');
add("axis", axis);
```
